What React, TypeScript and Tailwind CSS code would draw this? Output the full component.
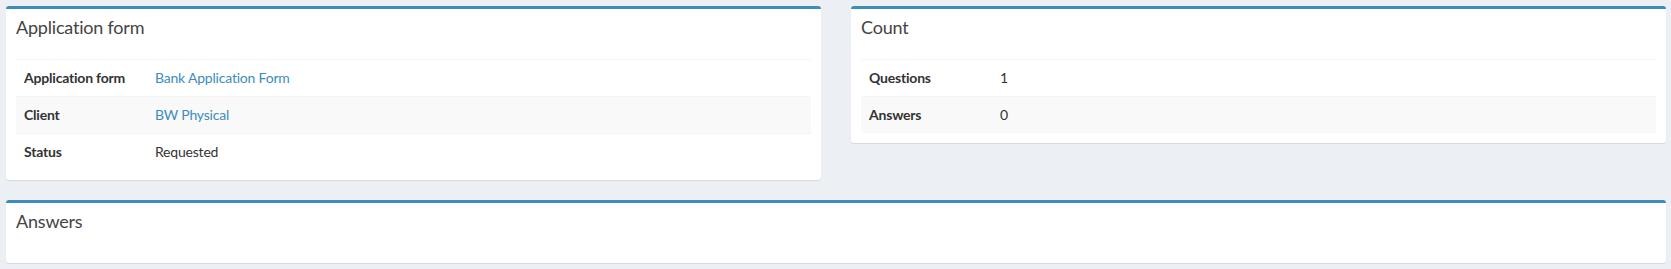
const font = { fontFamily: 'Lato, "Source Sans Pro", "Liberation Sans", sans-serif' };

type Row = { label: string; value: string; link?: boolean };

function Box({ title, rows }: { title: string; rows?: Row[] }) {
  return (
    <div className="rounded-[3px] border-t-[3px] border-[#3c8dbc] bg-white shadow-[0_1px_1px_rgba(0,0,0,0.1)]">
      <div className="px-[10px] pt-[9px] pb-[13px]">
        <h3 className="text-[18px] leading-[18px] text-[#444] font-normal tracking-[-0.2px]">{title}</h3>
      </div>
      <div className="p-[10px]">
        {rows && (
          <table className="w-full border-collapse text-[14px] text-[#333] tracking-[-0.2px]">
            <tbody>
              {rows.map((r, i) => (
                <tr key={r.label} className={i % 2 === 1 ? 'bg-[#f9f9f9]' : ''}>
                  <th className="w-[131px] border-t border-[#f4f4f4] p-[8px] text-left font-bold leading-[20px]">
                    {r.label}
                  </th>
                  <td className="border-t border-[#f4f4f4] p-[8px] leading-[20px]">
                    {r.link ? <a className="text-[#3c8dbc]">{r.value}</a> : r.value}
                  </td>
                </tr>
              ))}
            </tbody>
          </table>
        )}
      </div>
    </div>
  );
}

export default function App() {
  return (
    <div className="min-h-[269px] bg-[#ecf0f5] pl-[6px] pr-[5px] pt-[6px]" style={font}>
      <div className="grid grid-cols-2 items-start gap-[30px]">
        <Box
          title="Application form"
          rows={[
            { label: 'Application form', value: 'Bank Application Form', link: true },
            { label: 'Client', value: 'BW Physical', link: true },
            { label: 'Status', value: 'Requested' },
          ]}
        />
        <Box
          title="Count"
          rows={[
            { label: 'Questions', value: '1' },
            { label: 'Answers', value: '0' },
          ]}
        />
      </div>
      <div className="mt-[20px]">
        <Box title="Answers" />
      </div>
    </div>
  );
}
